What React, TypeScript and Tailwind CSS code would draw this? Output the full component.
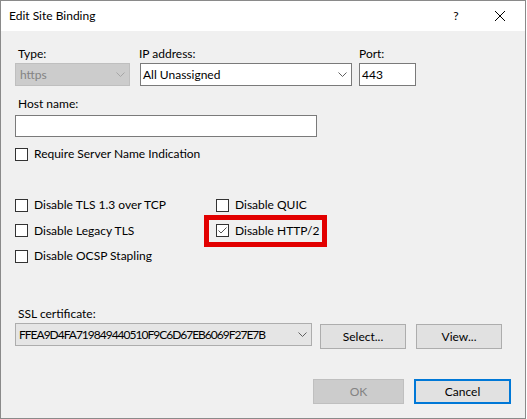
import React from "react";

function Chevron({ color = "#606060" }: { color?: string }) {
  return (
    <svg width="9" height="5" viewBox="0 0 9 5" className="shrink-0">
      <polyline points="0.5,0.5 4.5,4.5 8.5,0.5" fill="none" stroke={color} strokeWidth="1" />
    </svg>
  );
}

function Checkbox({ label, checked = false }: { label: string; checked?: boolean }) {
  return (
    <div className="flex items-center h-[16px]">
      <div className="w-[13px] h-[13px] border border-[#333333] bg-white flex items-center justify-center shrink-0">
        {checked && (
          <svg width="11" height="11" viewBox="0 0 11 11">
            <polyline points="1.5,5.5 4,8 9.5,2.5" fill="none" stroke="#555555" strokeWidth="1" />
          </svg>
        )}
      </div>
      <span className="ml-[6px] whitespace-nowrap">{label}</span>
    </div>
  );
}

export default function App() {
  return (
    <div className="w-[527px] h-[419px] bg-white font-['Lato','Noto_Sans',sans-serif] text-[12px] leading-[16px] text-black">
      <div className="w-[526px] h-[419px] border border-[#8a8a8a] flex flex-col bg-[#f0f0f0]">
        {/* title bar */}
        <div className="h-[30px] bg-white flex items-center pl-[8px] pr-[20px] shrink-0">
          <span className="text-[12px]">Edit Site Binding</span>
          <div className="flex-1" />
          <span className="w-[8px] text-center">?</span>
          <svg width="10" height="10" viewBox="0 0 10 10" className="ml-[35px]">
            <line x1="0" y1="0" x2="10" y2="10" stroke="#000" strokeWidth="1" />
            <line x1="10" y1="0" x2="0" y2="10" stroke="#000" strokeWidth="1" />
          </svg>
        </div>

        <div className="relative flex-1 pl-[14px] pt-[15px]">
          {/* row: type / ip / port */}
          <div className="flex">
            <div className="w-[115px]">
              <div className="pl-[3px] h-[16px]">Type:</div>
              <div className="mt-[1px] h-[23px] bg-[#cccccc] border border-[#bfbfbf] flex items-center pl-[4px] pr-[4px]">
                <span className="flex-1 text-[#838383]">https</span>
                <Chevron color="#a6a6a6" />
              </div>
            </div>
            <div className="w-[212px] ml-[10px]">
              <div className="-ml-px h-[16px]">IP address:</div>
              <div className="mt-[1px] h-[23px] bg-white border border-[#7a7a7a] flex items-center pl-[2px] pr-[4px]">
                <span className="flex-1">All Unassigned</span>
                <Chevron />
              </div>
            </div>
            <div className="w-[57px] ml-[7px]">
              <div className="h-[16px]">Port:</div>
              <div className="mt-[1px] h-[23px] bg-white border border-[#7a7a7a] flex items-center pl-[2px]">
                443
              </div>
            </div>
          </div>

          {/* host name */}
          <div className="mt-[10px] pl-[3px] h-[16px]">Host name:</div>
          <div className="mt-[3px] w-[302px] h-[22px] bg-white border border-[#7a7a7a]" />

          <div className="mt-[9px]">
            <Checkbox label="Require Server Name Indication" />
          </div>

          {/* options */}
          <div className="mt-[35px] grid grid-cols-[201px_1fr] gap-y-[9.5px]">
            <Checkbox label="Disable TLS 1.3 over TCP" />
            <Checkbox label="Disable QUIC" />
            <Checkbox label="Disable Legacy TLS" />
            <Checkbox label="Disable HTTP/2" checked />
            <Checkbox label="Disable OCSP Stapling" />
          </div>

          {/* highlight annotation */}
          <div className="absolute left-[203px] top-[184px] w-[123px] h-[32px] border-[5px] border-[#e20000]" />

          {/* ssl */}
          <div className="mt-[42px] pl-[3px] h-[16px]">SSL certificate:</div>
          <div className="mt-[1px] flex items-start">
            <div className="w-[297px] h-[23px] bg-[#e5e5e5] border border-[#adadad] flex items-center pl-[3px] pr-[4px]">
              <span className="flex-1 tracking-[-1px] whitespace-nowrap overflow-hidden">FFEA9D4FA719849440510F9C6D67EB6069F27E7B</span>
              <Chevron />
            </div>
            <button className="ml-[8px] mt-[1px] w-[86px] h-[25px] bg-[#e1e1e1] border border-[#adadad] flex items-center justify-center">
              Select...
            </button>
            <button className="ml-[10px] mt-[1px] w-[86px] h-[25px] bg-[#e1e1e1] border border-[#adadad] flex items-center justify-center">
              View...
            </button>
          </div>

          {/* footer */}
          <div className="mt-[30px] ml-[298px] flex gap-[10px]">
            <button className="w-[91px] h-[25px] bg-[#cccccc] border border-[#bfbfbf] text-[#838383] flex items-center justify-center">
              OK
            </button>
            <button className="w-[97px] h-[25px] bg-[#e1e1e1] border-2 border-[#0078d7] flex items-center justify-center">
              Cancel
            </button>
          </div>
        </div>
      </div>
    </div>
  );
}
